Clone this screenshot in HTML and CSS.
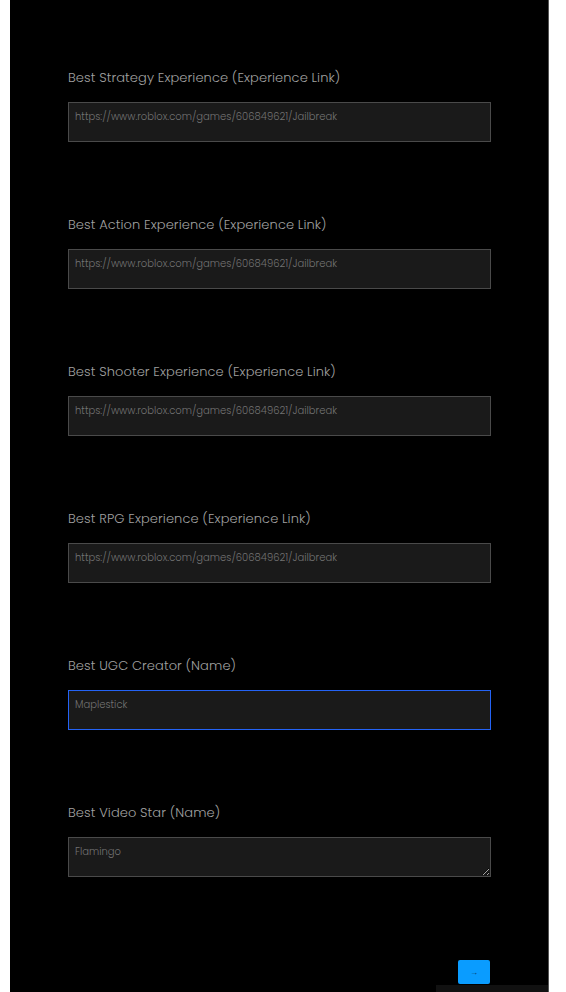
FILE: index.html
```html
<!DOCTYPE html>
<html lang="en">
<head>
    <meta charset="UTF-8">
    <meta name="viewport" content="width=device-width, initial-scale=1.0">
    <title>Awards Nominations</title>
    <link rel="stylesheet" href="styles.css">
</head>
<body>

<div class="panel">
    <form class="nominations">
        <div class="field">
            <label for="strategy">Best Strategy Experience (Experience Link)</label>
            <textarea id="strategy" class="box">https://www.roblox.com/games/606849621/Jailbreak</textarea>
        </div>
        <div class="field">
            <label for="action">Best Action Experience (Experience Link)</label>
            <textarea id="action" class="box">https://www.roblox.com/games/606849621/Jailbreak</textarea>
        </div>
        <div class="field">
            <label for="shooter">Best Shooter Experience (Experience Link)</label>
            <textarea id="shooter" class="box">https://www.roblox.com/games/606849621/Jailbreak</textarea>
        </div>
        <div class="field">
            <label for="rpg">Best RPG Experience (Experience Link)</label>
            <textarea id="rpg" class="box">https://www.roblox.com/games/606849621/Jailbreak</textarea>
        </div>
        <div class="field">
            <label for="ugc">Best UGC Creator (Name)</label>
            <textarea id="ugc" class="box focused">Maplestick</textarea>
        </div>
        <div class="field">
            <label for="video">Best Video Star (Name)</label>
            <textarea id="video" class="box resizable">Flamingo</textarea>
        </div>
        <div class="actions">
            <button type="button" class="next">&rarr;</button>
        </div>
    </form>
    <div class="footer-strip"></div>
</div>

</body>
</html>
```

FILE: styles.css
```css
body {
  margin: 0;
  padding: 0 17px 0 10px;
  background-color: #fff;
  font-family: "Poppins", "Lato", sans-serif;
  font-weight: 300;
}

.panel {
  background-color: #000;
  border-right: 1px solid #555;
  min-height: 992px;
  display: flex;
  flex-direction: column;
}

.nominations {
  padding: 69px 57px 0 58px;
  display: flex;
  flex-direction: column;
}

.field {
  display: flex;
  flex-direction: column;
  gap: 15px;
  margin-bottom: 74px;
}

.field label {
  color: #a0a0a0;
  font-size: 13px;
  line-height: 18px;
  letter-spacing: 0.1px;
}

.box {
  box-sizing: border-box;
  display: block;
  width: 100%;
  height: 40px;
  margin: 0;
  padding: 7px 6px 6px;
  background-color: #1a1a1a;
  border: 1px solid #4a4a4a;
  color: #737373;
  font-family: "Poppins", "Lato", sans-serif;
  font-weight: 300;
  font-size: 10px;
  line-height: 13px;
  resize: none;
  outline: none;
  overflow: hidden;
}

.box.focused {
  border-color: #2463f5;
}

.box.resizable {
  resize: vertical;
}

.actions {
  display: flex;
  justify-content: flex-end;
  margin-top: 9px;
}

.next {
  width: 32px;
  height: 24px;
  margin-right: 1px;
  padding: 0;
  border: none;
  border-radius: 2px;
  background-color: #0a9cff;
  color: #0b3a66;
  font-size: 8px;
  cursor: pointer;
}

.footer-strip {
  align-self: flex-end;
  width: 112px;
  height: 8px;
  margin-top: 1px;
  background-color: #111;
}
```
